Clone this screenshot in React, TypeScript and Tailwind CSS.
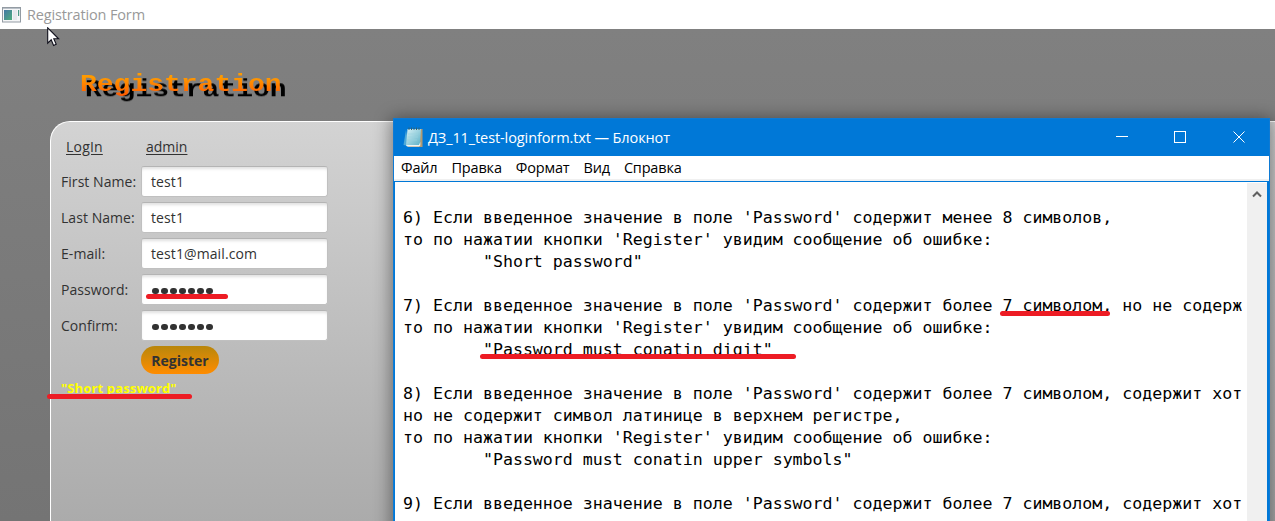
import React from "react";

const fields = [
  { label: "First Name:", value: "test1" },
  { label: "Last Name:", value: "test1" },
  { label: "E-mail:", value: "test1@mail.com" },
  { label: "Password:", dots: 7 },
  { label: "Confirm:", dots: 7 },
];

const menu = ["Файл", "Правка", "Формат", "Вид", "Справка"];

const lines = [
  "",
  "6) Если введенное значение в поле 'Password' содержит менее 8 символов,",
  "то по нажатии кнопки 'Register' увидим сообщение об ошибке:",
  "        \"Short password\"",
  "",
  "7) Если введенное значение в поле 'Password' содержит более 7 символом, но не содерж",
  "то по нажатии кнопки 'Register' увидим сообщение об ошибке:",
  "        \"Password must conatin digit\"",
  "",
  "8) Если введенное значение в поле 'Password' содержит более 7 символом, содержит хот",
  "но не содержит символ латинице в верхнем регистре,",
  "то по нажатии кнопки 'Register' увидим сообщение об ошибке:",
  "        \"Password must conatin upper symbols\"",
  "",
  "9) Если введенное значение в поле 'Password' содержит более 7 символом, содержит хот",
];

function AppIcon() {
  return (
    <svg width="19" height="16" viewBox="0 0 19 16" className="shrink-0">
      <defs>
        <linearGradient id="pane" x1="0" y1="0" x2="1" y2="1">
          <stop offset="0" stopColor="#4378a6" />
          <stop offset="1" stopColor="#4fae7c" />
        </linearGradient>
      </defs>
      <rect x="0.5" y="0.5" width="18" height="14.5" fill="#f5f6f7" stroke="#939ba3" />
      <path d="M1 1.5H18" stroke="#b9c0c8" />
      <rect x="2" y="3" width="8" height="10" fill="url(#pane)" />
      <rect x="11" y="3" width="4" height="10" fill="#e6e9ec" />
      <rect x="16" y="3" width="1.2" height="6" fill="#4f9a86" />
    </svg>
  );
}

function NotepadIcon() {
  return (
    <svg width="20" height="21" viewBox="0 0 20 21" className="shrink-0">
      <defs>
        <linearGradient id="paper" x1="0" y1="0" x2="1" y2="1">
          <stop offset="0" stopColor="#d9f2f6" />
          <stop offset="1" stopColor="#5bb0c6" />
        </linearGradient>
      </defs>
      <path d="M6 2H19.5V20H5Z" fill="#b39a72" />
      <path d="M3 3L0.5 18L6 19Z" fill="#4fa9d8" />
      <path d="M4.5 2H18L17 18.5H3Z" fill="url(#paper)" />
      <path d="M3 18H16L17.3 15V18.5L16 19.5H4Z" fill="#eef5f5" />
      <path d="M6 0.5V3M8.5 0.5V3M11 0.5V3M13.5 0.5V3M16 0.5V3" stroke="#35606f" />
      <path d="M5 7H15M5 10H15M4 13H14" stroke="#9bd3df" strokeWidth="0.6" />
    </svg>
  );
}

function Dots({ count }: { count: number }) {
  return (
    <span className="flex gap-[2.4px] pl-px pt-[3px]">
      {Array.from({ length: count }, (_, i) => (
        <span key={i} className="size-[6.7px] rounded-full bg-[#323232]" />
      ))}
    </span>
  );
}

function Notepad() {
  return (
    <section className="absolute left-[393px] top-[118px] flex h-[420px] w-[877px] flex-col border border-[#0e7ad4] bg-white shadow-[0_2px_16px_2px_rgba(0,0,0,0.42)]">
      <header className="flex h-[37px] shrink-0 items-center bg-[#0078d7] pl-[9px] text-white">
        <NotepadIcon />
        <span className="ml-[5px] whitespace-nowrap text-[14.5px] tracking-[-0.1px]">ДЗ_11_test-loginform.txt — Блокнот</span>
        <svg className="ml-auto mr-[22px] -mt-px" width="132" height="14" viewBox="0 0 132 14" fill="none" stroke="white">
          <path d="M1 6.5H13" />
          <rect x="59.5" y="1.5" width="11" height="11" />
          <path d="M118.5 1.5L129.5 12.5M129.5 1.5L118.5 12.5" />
        </svg>
      </header>
      <nav className="flex h-[25px] shrink-0 items-center gap-[14px] border-b-2 border-[#f0f0f0] pl-[7px] text-[14.5px] tracking-[-0.17px] text-black">
        {menu.map((m) => (
          <span key={m}>{m}</span>
        ))}
      </nav>
      <div className="flex min-h-0 flex-1 border-l border-r-2 border-t border-[#0078d7]">
        <div className="mr-[5px] min-w-0 flex-1 overflow-hidden pl-2 pt-[3px] font-['DejaVu_Sans_Mono',monospace] text-[16.6px] leading-[22px] text-black">
          {lines.map((l, i) => (
            <div key={i} className="h-[22px] whitespace-pre">{l}</div>
          ))}
        </div>
        <div className="mt-px flex w-5 shrink-0 justify-center bg-[#f0f0f0] pt-[7px]">
          <svg width="10" height="8" viewBox="0 0 10 8" fill="none" stroke="#606060" strokeWidth="2">
            <path d="M1 6.5L5 2.5L9 6.5" />
          </svg>
        </div>
      </div>
    </section>
  );
}

export default function App() {
  return (
    <main className="relative flex h-[521px] w-[1275px] flex-col overflow-hidden bg-white font-['Open_Sans',sans-serif] text-[#323232]">
      <header className="flex h-[29px] shrink-0 items-center gap-[6px] pl-[2px] text-[14.5px] text-[#999999]">
        <AppIcon />
        <span className="tracking-[-0.15px]">Registration Form</span>
      </header>

      <div className="flex flex-1 flex-col bg-linear-to-b from-[#808080] to-[#747474]">
        <div className="h-[92px] shrink-0 pl-20 pt-[41px] font-['Liberation_Mono',monospace] text-[28px] font-bold leading-[30px]">
          <h1 className="inline-block scale-y-[0.88] bg-linear-to-b from-[#ff9a00] from-20% to-[#ff4d00] bg-clip-text text-transparent drop-shadow-[5px_6px_0_#000000]">Registration</h1>
        </div>

        <div className="ml-[50px] flex flex-1 flex-col rounded-tl-[20px] border-l border-t border-white bg-linear-to-b from-[#d3d3d3] to-[#ababab] pl-[10px] pt-[14px] text-[14px]">
          <nav className="flex h-[20px] items-center pl-[5px] underline underline-offset-2">
            <span className="w-20 tracking-[0.2px]">LogIn</span>
            <span>admin</span>
          </nav>
          <div className="mt-[10px] flex flex-col gap-[5px]">
            {fields.map((f) => (
              <label key={f.label} className="flex h-[31px] items-center">
                <span className="w-20 shrink-0 whitespace-nowrap tracking-[0.05px]">{f.label}</span>
                <span className="flex h-[31px] w-[187px] items-center rounded-[3px] border border-[#c0c0c0] border-t-[#b4b4b4] bg-white pl-[9px] tracking-[0.1px] shadow-[inset_0_3px_3px_-1px_rgba(0,0,0,0.12)]">
                  {f.dots ? <Dots count={f.dots} /> : f.value}
                </span>
              </label>
            ))}
          </div>
          <button className="ml-[80px] mt-[5px] flex h-7 w-[78px] items-center justify-center rounded-full bg-linear-to-b from-[#b8860b] to-[#ff8c00] text-[14px] font-bold">
            Register
          </button>
          <p className="mt-[4px] text-[13px] font-bold leading-[20px] tracking-[0.15px] text-[#ffff00]">"Short password"</p>
        </div>
      </div>

      <Notepad />

      <i className="absolute left-[146px] top-[294px] h-[5px] w-[82px] rounded-full bg-[#ed1c24]" />
      <i className="absolute left-[47px] top-[394px] h-[5px] w-[145px] rounded-full bg-[#ed1c24]" />
      <i className="absolute left-[1000px] top-[311px] h-[5px] w-[110px] rounded-full bg-[#ed1c24]" />
      <i className="absolute left-[480px] top-[354px] h-[5px] w-[316px] rounded-full bg-[#ed1c24]" />
      <svg className="absolute left-[47px] top-[27px]" width="13" height="20" viewBox="0 0 13 20">
        <path d="M0.7 0.8V16.2L4.2 12.8L6.6 18.4L9.2 17.2L6.8 11.8H11.6Z" fill="white" stroke="#10101c" strokeWidth="1.1" />
      </svg>
    </main>
  );
}
